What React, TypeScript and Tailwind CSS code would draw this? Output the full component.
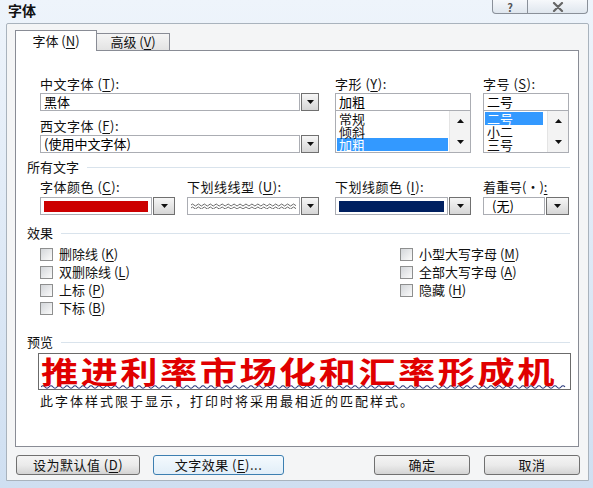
import React from 'react';

const font = "font-['Noto_Sans_CJK_SC','Liberation_Sans',sans-serif]";

function Arrow({ up = false }: { up?: boolean }) {
  return (
    <svg width="7" height="4" viewBox="0 0 7 4">
      <path d={up ? 'M0 4 L3.5 0 L7 4 Z' : 'M0 0 L7 0 L3.5 4 Z'} fill="#111" />
    </svg>
  );
}

function Label({ text, k, tail = ':' }: { text: string; k: string; tail?: string }) {
  return (
    <div className="h-[18px] leading-[18px] text-[13px] text-[#111] whitespace-nowrap tracking-[0.5px]">
      {text} (<span className="underline underline-offset-2">{k}</span>){tail}
    </div>
  );
}

function Combo({ className, btn, children }: { className: string; btn: string; children: React.ReactNode }) {
  return (
    <div className={`flex h-[18px] ${className}`}>
      <div className="flex-1 border border-[#abadb3] bg-white flex items-center px-[3px] overflow-hidden text-[13px] leading-[16px]">
        {children}
      </div>
      <div className={`${btn} ml-[1px] border border-[#707070] bg-gradient-to-b from-[#f6f6f6] to-[#d6d6d6] flex items-center justify-center`}>
        <Arrow />
      </div>
    </div>
  );
}

function SectionHead({ title }: { title: string }) {
  return (
    <div className="flex items-center h-[16px]">
      <span className="text-[13px] leading-[16px] text-[#111] whitespace-nowrap">{title}</span>
      <div className="flex-1 h-px bg-[#d9e3ec] ml-[8px]" />
    </div>
  );
}

function ListBox({ value, items, sel, hl }: { value: string; items: string[]; sel: number; hl: string }) {
  return (
    <div>
      <div className="h-[18px] border border-[#abadb3] bg-white px-[3px] text-[13px] leading-[16px]">{value}</div>
      <div className="h-[43px] -mt-px border border-[#abadb3] bg-white flex overflow-hidden">
        <div className="flex-1 pt-px pl-px">
          {items.map((it, i) => (
            <div
              key={it}
              className={`h-[13px] leading-[13px] text-[13px] pl-[2px] ${i === sel ? `${hl} bg-[#3399ff] text-white` : 'text-[#111]'}`}
            >
              {it}
            </div>
          ))}
        </div>
        <div className="w-[21px] flex flex-col bg-[#f3f3f3] border-l border-[#e4e4e4]">
          <div className="flex-1 flex items-center justify-center"><Arrow up /></div>
          <div className="flex-1 flex items-center justify-center"><Arrow /></div>
        </div>
      </div>
    </div>
  );
}

function Check({ label, k }: { label: string; k: string }) {
  return (
    <div className="flex items-center h-[18px]">
      <div className="w-[13px] h-[13px] border border-[#8e8f8f] bg-gradient-to-br from-[#d3d6da] to-[#fbfbfb]" />
      <span className="ml-[6px] text-[13px] text-[#111] whitespace-nowrap">
        {label} (<span className="underline underline-offset-2">{k}</span>)
      </span>
    </div>
  );
}

function Btn({ className, children, focus = false }: { className: string; children: React.ReactNode; focus?: boolean }) {
  return (
    <div
      className={`${className} h-[20px] rounded-[3px] border flex items-center justify-center text-[13px] text-[#111] tracking-[0.5px] ${
        focus
          ? 'border-[#3c7fb1] bg-gradient-to-b from-[#f4fafe] to-[#e1eef8]'
          : 'border-[#707070] bg-gradient-to-b from-[#f4f4f4] via-[#ebebeb] to-[#d4d4d4]'
      }`}
    >
      {children}
    </div>
  );
}

// wavy underline for the preview, 4px per wave
const wave = 'M0 2 q2 -2.4 4 0' + ' t4 0'.repeat(130);

export default function App() {
  return (
    <div className={`${font} w-[593px] h-[488px] relative overflow-hidden bg-gradient-to-b from-[#eef4fb] to-[#cfdff1]`}>
      {/* title bar */}
      <div className="h-[23px] relative">
        <div className="pl-[8px] pt-[1px] text-[14px] font-bold text-[#111] leading-[18px]">字体</div>
        <div className="absolute top-0 right-[5px] flex">
          <div className="w-[36px] h-[14px] border border-t-0 border-[#8a9099] rounded-bl-[4px] bg-gradient-to-b from-[#f6f8fb] to-[#dfe6ee] flex items-center justify-center">
            <span className="text-[11px] font-bold text-[#555] leading-[12px]">?</span>
          </div>
          <div className="w-[60px] h-[14px] border border-t-0 border-l-0 border-[#8a9099] rounded-br-[4px] bg-gradient-to-b from-[#f6f8fb] to-[#dfe6ee] flex items-center justify-center">
            <svg width="12" height="10" viewBox="0 0 12 10">
              <path d="M2 1 L10 9 M10 1 L2 9" stroke="#666" strokeWidth="2.2" strokeLinecap="round" />
            </svg>
          </div>
        </div>
      </div>

      {/* client area */}
      <div className="ml-[6px] w-[583px] h-[458px] border border-[#a9b3bd] rounded-t-[2px] bg-[#f4f5f6]">
        <div className="pl-[8px] pt-[6px]">
          {/* tabs */}
          <div className="flex items-end h-[20px] relative z-10">
            <div className="w-[82px] h-[21px] border border-b-0 border-[#898c95] bg-white flex items-center justify-center text-[13px] text-[#111] -mb-px">
              字体 (<span className="underline underline-offset-2">N</span>)
            </div>
            <div className="w-[73px] h-[17px] border border-l-0 border-b-0 border-[#898c95] bg-gradient-to-b from-[#f5f5f5] to-[#e3e3e3] flex items-center justify-center text-[13px] text-[#111]">
              高级 (<span className="underline underline-offset-2">V</span>)
            </div>
          </div>

          {/* tab page */}
          <div className="w-[564px] h-[397px] border border-[#898c95] bg-white pl-[11px] pr-[8px] pt-[24px]">
            <div className="flex ml-[13px]">
              <div className="w-[279px]">
                <Label text="中文字体" k="T" />
                <Combo className="w-[279px]" btn="w-[18px]">黑体</Combo>
                <div className="mt-[6px]">
                  <Label text="西文字体" k="F" />
                </div>
                <Combo className="w-[279px]" btn="w-[18px]">(使用中文字体)</Combo>
              </div>
              <div className="w-[136px] ml-[16px]">
                <Label text="字形" k="Y" />
                <ListBox value="加粗" items={['常规', '倾斜', '加粗']} sel={2} hl="w-[111px]" />
              </div>
              <div className="w-[86px] ml-[12px]">
                <Label text="字号" k="S" />
                <ListBox value="二号" items={['二号', '小二', '三号']} sel={0} hl="w-[58px]" />
              </div>
            </div>

            <div className="mt-[6px]">
              <SectionHead title="所有文字" />
            </div>

            <div className="flex ml-[13px] mt-[3px]">
              <div className="w-[135px]">
                <Label text="字体颜色" k="C" />
                <Combo className="w-[135px] mt-[1px]" btn="w-[22px]">
                  <div className="w-full h-[11px] bg-[#cc0000]" />
                </Combo>
              </div>
              <div className="w-[132px] ml-[12px]">
                <Label text="下划线线型" k="U" />
                <Combo className="w-[132px] mt-[1px]" btn="w-[18px]">
                  <svg width="106" height="6" viewBox="0 0 106 6">
                    <path
                      d={'M0 2 q1.5 -2 3 0' + ' t3 0'.repeat(35) + ' M0 5 q1.5 -2 3 0' + ' t3 0'.repeat(35)}
                      stroke="#555"
                      strokeWidth="0.9"
                      fill="none"
                    />
                  </svg>
                </Combo>
              </div>
              <div className="w-[136px] ml-[16px]">
                <Label text="下划线颜色" k="I" />
                <Combo className="w-[136px] mt-[1px]" btn="w-[22px]">
                  <div className="w-full h-[11px] bg-[#002060]" />
                </Combo>
              </div>
              <div className="w-[86px] ml-[12px]">
                <div className="h-[18px] leading-[18px] text-[13px] text-[#111] whitespace-nowrap">
                  着重号(·)<span className="underline underline-offset-2">:</span>
                </div>
                <Combo className="w-[86px] mt-[1px]" btn="w-[23px]">
                  <span className="pl-[5px]">(无)</span>
                </Combo>
              </div>
            </div>

            <div className="mt-[10px]">
              <SectionHead title="效果" />
            </div>

            <div className="flex ml-[13px] mt-[4px]">
              <div className="w-[360px]">
                <Check label="删除线" k="K" />
                <Check label="双删除线" k="L" />
                <Check label="上标" k="P" />
                <Check label="下标" k="B" />
              </div>
              <div>
                <Check label="小型大写字母" k="M" />
                <Check label="全部大写字母" k="A" />
                <Check label="隐藏" k="H" />
              </div>
            </div>

            <div className="mt-[17px]">
              <SectionHead title="预览" />
            </div>

            <div className="ml-[11px] mt-[3px] w-[533px] h-[37px] border border-[#6b6b6b] bg-white flex flex-col pl-[2px] pt-px overflow-hidden">
              <div className="h-[29px] shrink-0 leading-[30px] text-[30px] font-bold text-[#e00000] tracking-[2px] whitespace-nowrap scale-x-[1.24] origin-left">
                推进利率市场化和汇率形成机
              </div>
              <svg width="526" height="4" viewBox="0 0 526 4" className="block shrink-0 mt-px">
                <path d={wave} stroke="#24357a" strokeWidth="1.1" fill="none" />
              </svg>
            </div>
            <div className="ml-[13px] mt-[4px] h-[14px] leading-[14px] text-[13px] tracking-[2px] text-[#111] whitespace-nowrap">
              此字体样式限于显示，打印时将采用最相近的匹配样式。
            </div>
          </div>

          {/* buttons */}
          <div className="flex mt-[8px] pr-[8px]">
            <Btn className="w-[124px] ml-[1px]">
              设为默认值 (<span className="underline underline-offset-2">D</span>)
            </Btn>
            <Btn className="w-[131px] ml-[13px]" focus>
              文字效果 (<span className="underline underline-offset-2">E</span>)...
            </Btn>
            <div className="flex-1" />
            <Btn className="w-[96px]">确定</Btn>
            <Btn className="w-[96px] ml-[14px]">取消</Btn>
          </div>
        </div>
      </div>
    </div>
  );
}
